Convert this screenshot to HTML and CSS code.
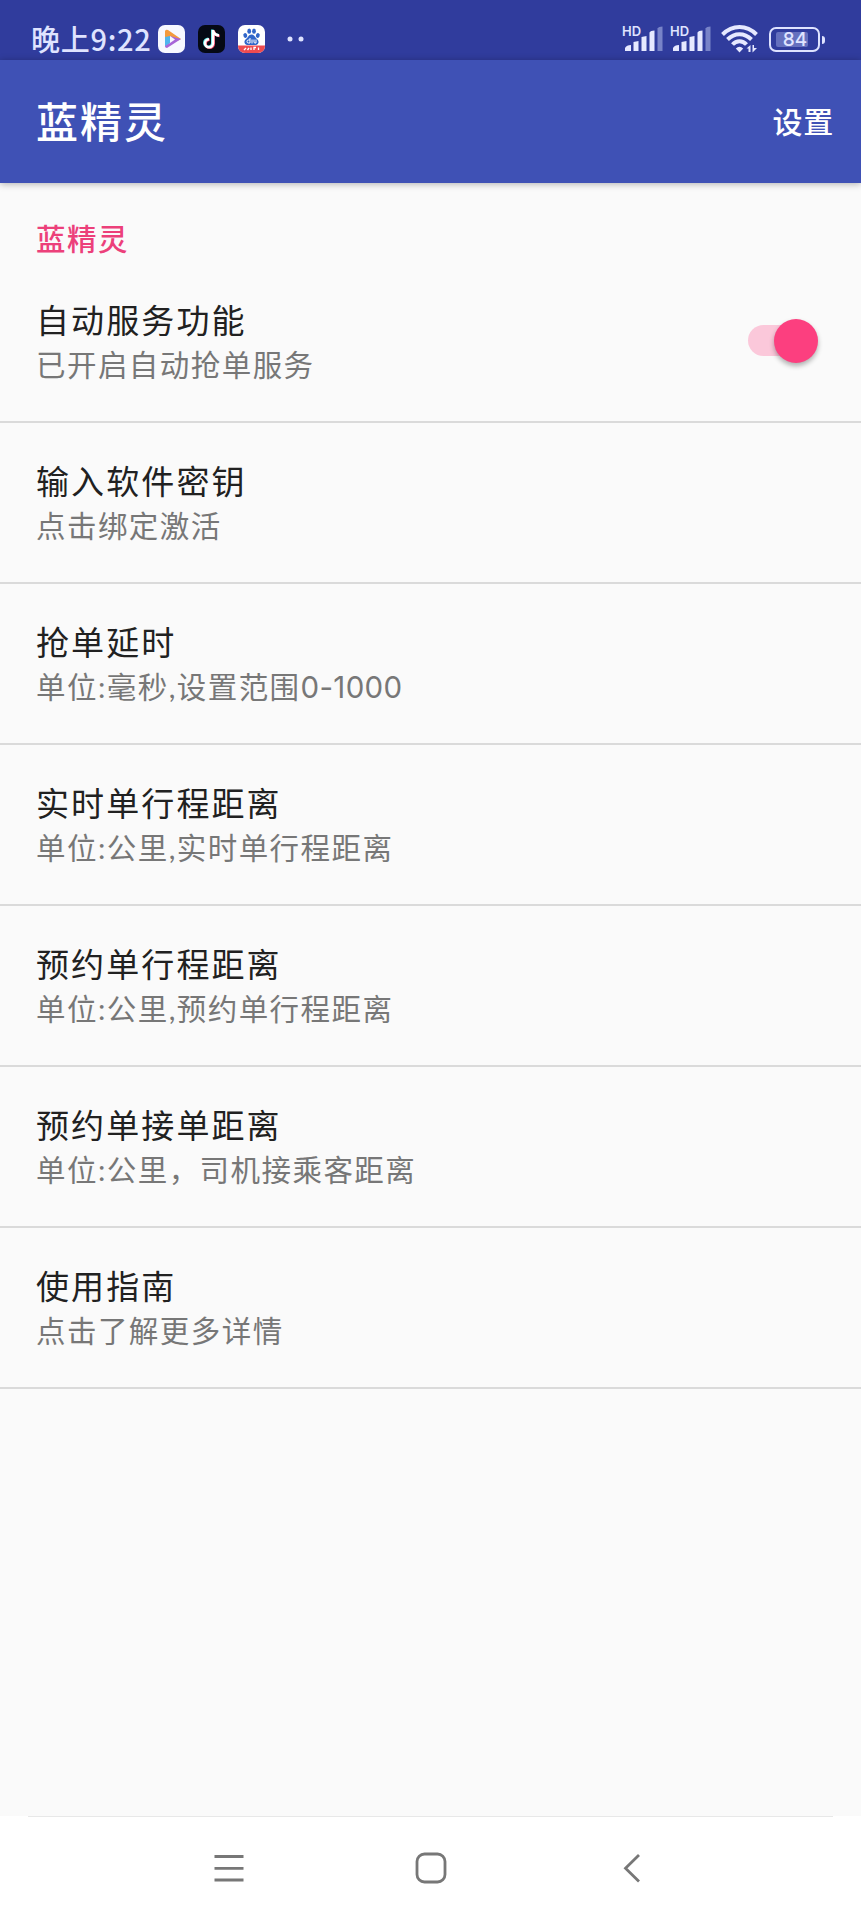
FILE: index.html
```html
<!DOCTYPE html>
<html lang="zh-CN">
<head>
    <meta charset="UTF-8">
    <meta name="viewport" content="width=device-width, initial-scale=1.0">
    <title>蓝精灵</title>
    <link rel="stylesheet" href="styles.css">
</head>
<body>
    <!-- 状态栏 -->
    <div class="status-bar">
        <span class="clock">晚上9:22</span>
        <div class="app-icons">
            <svg width="27" height="28" viewBox="0 0 27 28">
                <rect width="27" height="28" rx="7" fill="#f7f8ff"/>
                <path d="M7 6v16l5-4v-8z" fill="#4fb4ee"/>
                <path d="M7 6q1-2 3-1l13 9-4 2-7-5-5 1z" fill="#f39a3e"/>
                <path d="M23 14L9 23q-2 0-2-2l5-3v-7z" fill="#a765d8"/>
                <path d="M12 11l5 3.500-5 3.500z" fill="#f7f8ff"/>
            </svg>
            <svg width="27" height="28" viewBox="0 0 27 28">
                <rect width="27" height="28" rx="7" fill="#050914"/>
                <g fill="none" stroke-width="2.600">
                    <path d="M14.300 4.500v13.300a4 4 0 1 1-4-4M14.300 5q1 4.500 6 5" stroke="#4de0e4"/>
                    <path d="M15.700 5.500v13.300a4 4 0 1 1-4-4M15.700 6q1 4.500 6 5" stroke="#f5476a"/>
                    <path d="M15 5v13.300a4 4 0 1 1-4-4M15 5.500q1 4.500 6 5" stroke="#fff"/>
                </g>
            </svg>
            <svg width="27" height="28" viewBox="0 0 27 28">
                <rect width="27" height="28" rx="7" fill="#fff"/>
                <path d="M0 20.500h27V21a7 7 0 0 1-7 7H7a7 7 0 0 1-7-7z" fill="#ee4b50"/>
                <g fill="#2f65c9">
                    <ellipse cx="7.300" cy="10.500" rx="1.900" ry="2.400" transform="rotate(-20 7.300 10.500)"/>
                    <ellipse cx="11.200" cy="6.200" rx="1.900" ry="2.600"/>
                    <ellipse cx="16" cy="6.200" rx="1.900" ry="2.600"/>
                    <ellipse cx="19.800" cy="10.500" rx="1.900" ry="2.400" transform="rotate(20 19.800 10.500)"/>
                    <path d="M13.500 9.500c3 0 3.500 3 5.500 4.500 2.500 2 2 6-1.500 6h-8c-3.500 0-4-4-1.500-6 2-1.500 2.500-4.500 5.500-4.500z"/>
                </g>
                <path d="M12 13v5h-1.500a1.500 1.500 0 0 1 0-3H12M14 14.500v4M16 14.500V17q0 1 1 1h1v-3.500" fill="none" stroke="#fff"/>
                <path d="M6 25l2-2M9.500 25l1.500-2M13 25v-2.500M16 25v-2.500h2M20.500 22.500V25" fill="none" stroke="#fff" stroke-width="1.300"/>
            </svg>
        </div>
        <svg class="more-dots" width="17" height="6" viewBox="0 0 17 6">
            <circle cx="3" cy="3" r="2.500"/>
            <circle cx="14" cy="3" r="2.500"/>
        </svg>
        <div class="status-right">
            <div class="signal">
                <span class="hd">HD</span>
                <svg width="40" height="28" viewBox="0 0 40 28">
                    <path d="M2 26v-3q1.500-3 6-3v6zM10.500 26v-9l5-1v10zM18.500 26V12l5-1v15zM26.500 26V7.500q1-2 5-2V26z"/>
                    <path class="dim" d="M34.500 26V3.500q1-2 5-2V26z"/>
                </svg>
            </div>
            <div class="signal">
                <span class="hd">HD</span>
                <svg width="40" height="28" viewBox="0 0 40 28">
                    <path d="M2 26v-3q1.500-3 6-3v6zM10.500 26v-9l5-1v10zM18.500 26V12l5-1v15zM26.500 26V7.500q1-2 5-2V26z"/>
                    <path class="dim" d="M34.500 26V3.500q1-2 5-2V26z"/>
                </svg>
            </div>
            <svg class="wifi" width="37" height="28" viewBox="0 0 37 28">
                <g class="wifi-waves">
                    <path d="M1.500 9.500Q9 2 18.500 2t17 7.500"/>
                    <path d="M6.500 14.500q5.500-5.300 12-5.300t12 5.300"/>
                    <path d="M11.500 19.500q3-3.300 7-3.300t7 3.300"/>
                </g>
                <path d="M14.800 23.500q3.700-3.500 7.400 0L18.500 27.500z"/>
                <path d="M25.500 23.500l4-3.500v7h-2v-3.500zM31.500 20h1.500v3h3l-4.500 4.500z"/>
            </svg>
            <div class="battery">
                <span class="battery-level">84</span>
            </div>
        </div>
    </div>

    <!-- 标题栏 -->
    <header class="toolbar">
        <h1>蓝精灵</h1>
        <span class="toolbar-action">设置</span>
    </header>

    <!-- 设置列表 -->
    <main>
        <h2 class="category">蓝精灵</h2>
        <div class="item">
            <div class="item-text">
                <div class="title">自动服务功能</div>
                <div class="summary">已开启自动抢单服务</div>
            </div>
            <div class="switch"><div class="thumb"></div></div>
        </div>
        <div class="item">
            <div class="item-text">
                <div class="title">输入软件密钥</div>
                <div class="summary">点击绑定激活</div>
            </div>
        </div>
        <div class="item">
            <div class="item-text">
                <div class="title">抢单延时</div>
                <div class="summary">单位:毫秒,设置范围<span class="range">0-1000</span></div>
            </div>
        </div>
        <div class="item">
            <div class="item-text">
                <div class="title">实时单行程距离</div>
                <div class="summary">单位:公里,实时单行程距离</div>
            </div>
        </div>
        <div class="item">
            <div class="item-text">
                <div class="title">预约单行程距离</div>
                <div class="summary">单位:公里,预约单行程距离</div>
            </div>
        </div>
        <div class="item">
            <div class="item-text">
                <div class="title">预约单接单距离</div>
                <div class="summary">单位:公里，司机接乘客距离</div>
            </div>
        </div>
        <div class="item">
            <div class="item-text">
                <div class="title">使用指南</div>
                <div class="summary">点击了解更多详情</div>
            </div>
        </div>
    </main>

    <!-- 导航键 -->
    <nav class="nav-bar">
        <svg width="32" height="32" viewBox="0 0 32 32">
            <path d="M1.500 4.500h29M1.500 16.300h29M1.500 28h29"/>
        </svg>
        <svg width="32" height="32" viewBox="0 0 32 32">
            <rect x="2" y="2" width="28" height="28" rx="7.500"/>
        </svg>
        <svg width="32" height="32" viewBox="0 0 32 32">
            <path d="M22 3L8.500 16.300 22 29.500"/>
        </svg>
    </nav>
</body>
</html>
```

FILE: styles.css
```css
/* General */
body {
    margin: 0;
    height: 1920px;
    display: flex;
    flex-direction: column;
    overflow: hidden;
    font-family: Inter, "Noto Sans CJK SC", sans-serif;
    background-color: #fafafa;
    color: #212121;
}

svg {
    display: block;
}

/* Status bar */
.status-bar {
    display: flex;
    align-items: center;
    height: 60px;
    box-sizing: border-box;
    padding: 18px 36px 0 31px;
    background-color: #303c9d;
    color: #dfe3ff;
}

.clock {
    width: 127px;
    margin-top: -3px;
    font-family: "Noto Sans CJK SC", sans-serif;
    font-size: 29px;
    font-weight: 500;
    line-height: 40px;
    letter-spacing: 0.7px;
    white-space: nowrap;
}

.app-icons {
    display: flex;
    gap: 13px;
}

.more-dots {
    margin-left: 22px;
    fill: #dfe3ff;
}

.status-right {
    display: flex;
    align-items: center;
    margin-left: auto;
    fill: #e6e9ff;
}

.signal {
    position: relative;
    margin-right: 8px;
}

.signal .dim {
    fill: #7883c8;
}

.hd {
    position: absolute;
    left: -1px;
    top: -1px;
    font-size: 13px;
    font-weight: 600;
    line-height: 14px;
}

.wifi {
    margin: 0 11px 0 2px;
}

.wifi-waves {
    fill: none;
    stroke: #e6e9ff;
    stroke-width: 4;
}

.battery {
    position: relative;
    width: 51px;
    height: 25px;
    box-sizing: border-box;
    margin-right: 5px;
    padding: 3px 10px 3px 5px;
    border: 2px solid #dfe3ff;
    border-radius: 7px;
}

.battery::after {
    content: "";
    position: absolute;
    right: -7px;
    top: 7px;
    width: 3px;
    height: 8px;
    border-radius: 0 3px 3px 0;
    background-color: #dfe3ff;
}

.battery-level {
    display: block;
    height: 15px;
    padding-left: 6px;
    border-radius: 2px;
    background-color: #6570be;
    font-size: 19px;
    font-weight: 500;
    line-height: 16px;
    text-align: center;
}

/* Toolbar */
.toolbar {
    display: flex;
    align-items: center;
    justify-content: space-between;
    height: 123px;
    padding: 0 27px 0 36px;
    background-color: #3f51b5;
    color: #fff;
    box-shadow: 0 1px 7px rgba(0, 0, 0, 0.3);
}

.toolbar h1 {
    margin: 2px 0 0;
    font-size: 42px;
    font-weight: 500;
    line-height: 60px;
    letter-spacing: 2px;
}

.toolbar-action {
    margin-bottom: 3px;
    font-size: 30px;
    font-weight: 500;
    letter-spacing: 0.8px;
}

/* Preference list */
main {
    flex: 1;
}

.category {
    margin: 0;
    padding: 34px 36px 0;
    font-size: 29.5px;
    font-weight: 500;
    line-height: 45px;
    letter-spacing: 1.5px;
    color: #ec407a;
}

.item {
    display: flex;
    justify-content: space-between;
    height: 161px;
    box-sizing: border-box;
    padding: 37px 43px 0 36px;
    border-bottom: 2px solid #dadada;
}

.title {
    font-size: 33px;
    line-height: 45px;
    letter-spacing: 2.1px;
}

.summary {
    font-family: Lato, "Noto Sans CJK SC", sans-serif;
    font-size: 29.5px;
    line-height: 42px;
    letter-spacing: 1.45px;
    color: #777;
}

.range {
    font-family: Inter, sans-serif;
    font-weight: 400;
    letter-spacing: 0.3px;
}

.switch {
    display: flex;
    align-items: center;
    justify-content: flex-end;
    width: 70px;
    height: 31px;
    margin-top: 26px;
    border-radius: 16px;
    background: linear-gradient(to right, #fbc8da 60px, transparent 60px);
}

.thumb {
    width: 44px;
    height: 44px;
    border-radius: 50%;
    background-color: #fc3f7f;
    box-shadow: 0 3px 5px rgba(0, 0, 0, 0.3);
}

/* Navigation bar */
.nav-bar {
    display: flex;
    justify-content: center;
    gap: 170px;
    height: 68px;
    padding-top: 36px;
    background: linear-gradient(#e8e8e8, #e8e8e8) 28px 0 / 805px 1px no-repeat #fff;
    fill: none;
    stroke: #777;
    stroke-width: 2.8;
}
```
